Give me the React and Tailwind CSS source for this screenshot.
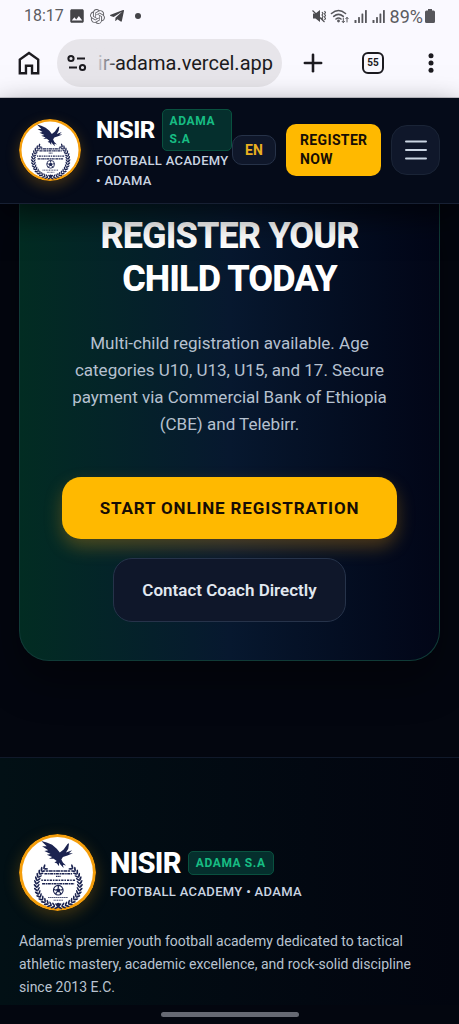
import { Plus } from "lucide-react";
import { FaTelegramPlane } from "react-icons/fa";
import { MdImage } from "react-icons/md";
import { SiOpenai } from "react-icons/si";

const leaves = Array.from({ length: 16 }, (_, i) => 97 + i * 9.2);

function Crest({ className }) {
    return (
        <svg viewBox="0 0 100 100" className={className} role="img" aria-label="Nisir Football Academy crest">
            <circle cx="50" cy="50" r="50" fill="#f59e0b" />
            <circle cx="50" cy="50" r="46" fill="#fff" />
            <g fill="#1b2350">
                {/* Eagle */}
                <path d="M29 9 L36 11 L43 14 L49 19 L53 24 L58 20 L63 13 L65 12 L64 19 L61 24 L69 21 L65 25 L70 25 L63 28 L57 30 L55 33 L57 37 L61 41 L57 40 L58 44 L54 40 L52 37 L52 42 L49 38 L46 37 L49 35 L45 32 L39 32 L43 30 L36 27 L41 26 L33 22 L38 21 L30 16 L36 16 Z" />
                {/* Wreath */}
                {leaves.map((a) => (
                    <g key={a}>
                        <g transform={`translate(51 66) rotate(${a}) translate(28 0)`}>
                            <ellipse cx="2.200" rx="1.2" ry="3.2" transform="rotate(-38)" />
                            <ellipse cx="-2.200" rx="1.1" ry="3" transform="rotate(38)" />
                        </g>
                        <g transform={`translate(51 66) scale(-1 1) rotate(${a}) translate(28 0)`}>
                            <ellipse cx="2.200" rx="1.2" ry="3.2" transform="rotate(-38)" />
                            <ellipse cx="-2.200" rx="1.1" ry="3" transform="rotate(38)" />
                        </g>
                    </g>
                ))}
                <circle cx="51" cy="92" r="2.6" />
            </g>
            <g stroke="#1b2350" fill="none">
                <path d="M35 48H67" strokeWidth="2" strokeDasharray="3 .7 5 .8" />
                <path d="M33 51.5H69" strokeWidth="2" strokeDasharray="4 .8 2 .6" />
                <path d="M48 55H54" strokeWidth="1.6" strokeDasharray="1.6 .6" />
                <path d="M29 60H73" strokeWidth="2" strokeDasharray="2 1.3 3 1.2" />
                <path d="M30 64.5H72" strokeWidth="2" strokeDasharray="4 .8 2 .6" />
                <path d="M38 82.5H64" strokeWidth="1.4" strokeDasharray="1.6 1" />
                <path d="M45 86H57" strokeWidth="1.2" strokeDasharray="1.4 .8" />
                <circle cx="51" cy="73" r="6.3" strokeWidth="1.4" />
                <path d="M51 67v3M45 72l3 1M57 72l-3 1M47.500 78l1.500-2.500M54.500 78l-1.500-2.500" strokeWidth="1.6" />
            </g>
            <path d="M51 70l3 2.200-1.200 3.500h-3.600L48 72.200z" fill="#1b2350" />
        </svg>
    );
}

function Signal() {
    return (
        <svg viewBox="0 0 13 14" className="h-3.5 w-3.5" fill="#56565b">
            <rect x="0" y="11" width="2" height="3" rx=".6" />
            <rect x="3.600" y="8" width="1.800" height="6" rx=".6" />
            <rect x="7" y="4.500" width="1.800" height="9.500" rx=".6" />
            <rect x="10.500" y="1" width="1.800" height="13" rx=".6" />
        </svg>
    );
}

function StatusBar() {
    return (
        <div className="flex h-8 items-center justify-between px-6 text-[#5c5c61]">
            <div className="flex items-center gap-1 text-[16px]">
                <span>18:17</span>
                <MdImage size={18} className="text-[#444448]" />
                <SiOpenai size={15} className="text-[#66666b]" />
                <FaTelegramPlane size={16} className="text-[#444448]" />
                <span className="ml-1.5 h-1.5 w-1.5 rounded-full bg-[#444448]" />
            </div>
            <div className="flex items-center gap-1 text-[18px]">
                <svg viewBox="0 0 14 14" className="h-3.5 w-3.5" fill="#4c4c50">
                    <path d="M1 4.500h2.500L8 1v12L3.500 9.500H1z" />
                    <path d="M10 3l1 1.500-1 1.500 1 1.500-1 1.500 1 1.500M12.500 2l1 1.500-1 1.500 1 1.500-1 1.500 1 1.500-1 1.500M.5 1.500l12 11.500" fill="none" stroke="#4c4c50" strokeWidth="1.100" />
                </svg>
                <svg viewBox="0 0 20 16" className="h-4 w-5" fill="none" stroke="#56565b" strokeWidth="1.600" strokeLinecap="round">
                    <path d="M1.500 5.500q7-6 14 0M3.700 8.300q4.800-4 9.600 0M6 11q2.500-2 5 0" />
                    <circle cx="8.500" cy="13" r=".6" fill="#56565b" />
                    <path d="M13.300 10v4.500m-1.200-1.200l1.200 1.300 1.200-1.300M17 14V9.500m-1.200 1.200L17 9.400l1.200 1.300" strokeWidth="1" />
                </svg>
                <Signal />
                <Signal />
                <span className="flex items-center gap-0.5">
                    89%
                    <svg viewBox="0 0 10 14" className="h-3.5 w-2.5" fill="#56565b">
                        <path d="M3 0h4v1.500h1.500a1.500 1.500 0 0 1 1.500 1.500v9.500a1.500 1.500 0 0 1-1.500 1.500h-7A1.500 1.500 0 0 1 0 12.500V3a1.500 1.500 0 0 1 1.500-1.500H3z" />
                    </svg>
                </span>
            </div>
        </div>
    );
}

function BrowserBar() {
    return (
        <div className="flex h-[66px] items-center border-b border-[#c9c8cf] pb-1 pl-4 text-[#1c1b20]">
            <button aria-label="Home" className="w-[41px]">
                <svg viewBox="0 0 24 24" className="h-[26px] w-[26px]" fill="none" stroke="currentColor" strokeWidth="2.200">
                    <path d="M3.500 21.500V8.800L12 2.700l8.500 6.100v12.700h-5.700v-7H9.200v7z" />
                </svg>
            </button>
            <div className="flex h-12 min-w-0 flex-1 items-center gap-2 rounded-full bg-[#e7e5ea] pr-[9px] pl-[10px]">
                <svg viewBox="0 0 20 18" className="h-[18px] w-5 shrink-0" fill="none" stroke="currentColor" strokeWidth="2">
                    <circle cx="4" cy="4.500" r="2.600" />
                    <path d="M10 4.500h8M2 13.500h8" />
                    <circle cx="15.500" cy="13.500" r="2.600" />
                </svg>
                <div className="relative min-w-0 flex-1">
                    <input
                        aria-label="Address"
                        readOnly
                        value="ir-adama.vercel.app"
                        className="w-full bg-transparent text-right text-[20px] outline-none"
                    />
                    <span className="pointer-events-none absolute inset-y-0 left-0 w-6 bg-linear-to-r from-[#e7e5ea] to-transparent" />
                </div>
            </div>
            <button aria-label="New tab" className="flex w-[62px] justify-center">
                <Plus size={28} strokeWidth={2.2} />
            </button>
            <button aria-label="Open tabs" className="flex w-[58px] justify-center">
                <span className="flex h-[22px] w-[22px] items-center justify-center rounded-md border-2 border-current text-[10px] font-bold">
                    55
                </span>
            </button>
            <button aria-label="More" className="flex w-[57px] justify-center">
                <svg viewBox="0 0 6 20" className="h-5 w-1.5" fill="currentColor">
                    <circle cx="3" cy="2.700" r="2.500" />
                    <circle cx="3" cy="10" r="2.500" />
                    <circle cx="3" cy="17.300" r="2.500" />
                </svg>
            </button>
        </div>
    );
}

function Badge() {
    return (
        <span className="rounded-[5px] border border-[#09513f] bg-[#052f2d] px-[7px] py-[2px] text-[12px] leading-[18px] font-bold tracking-wider text-[#17bd83]">
            ADAMA S.A
        </span>
    );
}

function Header() {
    return (
        <header className="relative z-10 flex items-center justify-between border-b border-[#172033] bg-[#050b19] px-[19px] pt-[11px] pb-[12px] shadow-[0_12px_30px_rgba(0,0,0,0.6)]">
            <a href="#home" className="flex min-w-0 flex-1 items-center gap-[15px]">
                <Crest className="h-[62px] w-[62px] shrink-0 rounded-full shadow-[0_5px_14px_rgba(245,158,11,0.25)]" />
                <div className="w-[136px]">
                    <div className="flex items-center gap-[7px]">
                        <span className="text-[24px] leading-[30px] font-extrabold tracking-tight text-white">NISIR</span>
                        <Badge />
                    </div>
                    <p className="text-[13px] leading-[20px] font-medium tracking-wide whitespace-nowrap text-[#cad5e2]">
                        FOOTBALL ACADEMY
                        <br />• ADAMA
                    </p>
                </div>
            </a>
            <div className="flex items-center gap-[10px]">
                <button className="h-[30px] w-[44px] rounded-[10px] border border-[#263248] bg-[#0f172a] text-[14px] font-bold text-[#eab020]">
                    EN
                </button>
                <a href="#register" className="w-[95px] rounded-[10px] bg-[#ffb900] px-[14px] py-[7px] text-[14px] leading-[19px] font-bold tracking-wide text-[#160d05]">
                    REGISTER NOW
                </a>
                <button aria-label="Menu" className="flex h-[50px] w-[49px] items-center justify-center rounded-[16px] border border-[#1a2436] bg-[#0f172a]">
                    <svg viewBox="0 0 22 20" className="h-5 w-[22px]" stroke="#cad5e2" strokeWidth="2" strokeLinecap="round">
                        <path d="M1 1.500h20M1 10h20M1 18.500h20" />
                    </svg>
                </button>
            </div>
        </header>
    );
}

function Register() {
    return (
        <section id="register" className="px-[19px] pb-24">
            <div className="flex flex-col items-center rounded-b-[30px] border border-t-0 border-[#103b37] bg-linear-to-r from-[#022c22] via-[#07182f] to-[#020617] px-[42px] pt-[11px] pb-[38px] text-center shadow-[0_20px_40px_rgba(0,0,0,0.4)]">
                <h1 className="text-[36px] leading-[43px] font-extrabold tracking-tight text-white">
                    REGISTER YOUR CHILD TODAY
                </h1>
                <p className="mt-[29px] text-[17px] leading-[27px] text-[#b6c1d0]">
                    Multi-child registration available. Age categories U10, U13, U15, and 17. Secure payment via
                    Commercial Bank of Ethiopia (CBE) and Telebirr.
                </p>
                <a href="#form" className="mt-[39px] w-full rounded-[19px] bg-[#ffb900] py-[19px] text-[17px] leading-[24px] font-bold tracking-wider text-[#160d05] shadow-[0_8px_18px_rgba(245,158,11,0.3)]">
                    START ONLINE REGISTRATION
                </a>
                <a href="#contact" className="mt-[19px] rounded-[19px] border border-[#26334a] bg-[#0f172a] px-[28px] py-[19px] text-[17px] leading-[24px] font-semibold text-[#e2e8f0]">
                    Contact Coach Directly
                </a>
            </div>
        </section>
    );
}

function Footer() {
    return (
        <footer className="border-t border-[#10192a] bg-linear-to-r from-[#021015] to-[#02050f] px-[19px] pt-[76px] pb-[6px]">
            <a href="#home" className="flex items-center gap-[14px]">
                <Crest className="h-[77px] w-[77px] rounded-full shadow-[0_5px_16px_rgba(245,158,11,0.25)]" />
                <div>
                    <div className="flex items-center gap-[7px]">
                        <span className="text-[29px] leading-[38px] font-extrabold tracking-tight text-white">NISIR</span>
                        <Badge />
                    </div>
                    <p className="text-[13px] leading-[20px] font-medium tracking-wide text-[#cad5e2]">
                        FOOTBALL ACADEMY • ADAMA
                    </p>
                </div>
            </a>
            <p className="mt-[19px] text-[14px] leading-[23px] text-[#b9c3d0]">
                Adama's premier youth football academy dedicated to tactical athletic mastery, academic excellence, and
                rock-solid discipline since 2013 E.C.
            </p>
        </footer>
    );
}

export default function App() {
    return (
        <div className="flex min-h-screen flex-col bg-[#03060f] font-['Roboto',sans-serif]">
            <div className="bg-[#faf9ff]">
                <StatusBar />
                <BrowserBar />
            </div>
            <Header />
            <main>
                <Register />
            </main>
            <Footer />
            {/* Gesture bar */}
            <div className="flex flex-1 justify-center bg-[#03060f] pt-[7px] pb-[7px]">
                <span className="h-[5px] w-[138px] rounded-full bg-[#666973]" />
            </div>
        </div>
    );
}
